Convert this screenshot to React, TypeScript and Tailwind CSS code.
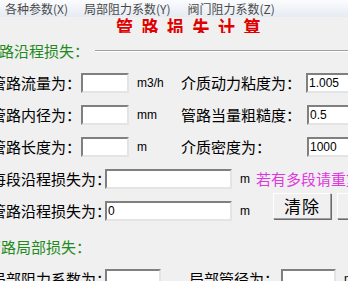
const cjk = "font-['Noto_Sans_CJK_SC',sans-serif]";
const latin = "font-['Liberation_Sans','Noto_Sans_CJK_SC',sans-serif]";

function Box({ w, value }: { w: string; value?: string }) {
  return (
    <div
      className={`${w} h-[20px] shrink-0 bg-white border-2 border-t-[#808080] border-l-[#808080] border-r-[#e4e4e4] border-b-[#e4e4e4] pl-[1px] text-[12px] leading-[16px] text-black ${latin}`}
    >
      {value}
    </div>
  );
}

function Label({ w, text, className = '' }: { w: string; text: string; className?: string }) {
  return (
    <span className={`${w} shrink-0 whitespace-nowrap text-[15px] leading-[20px] text-black ${cjk} ${className}`}>
      {text}
    </span>
  );
}

function Unit({ w, text }: { w: string; text: string }) {
  return <span className={`${w} shrink-0 pl-[8px] text-[12px] text-black ${latin}`}>{text}</span>;
}

export default function App() {
  return (
    <div className="w-[348px] h-[281px] overflow-hidden bg-[#f0f0f0] flex flex-col">
      {/* menu */}
      <div className="h-[17px] shrink-0 flex items-center bg-gradient-to-b from-[#fbfcfe] to-[#e6ebf3] text-[12px] text-[#4a4a4a] font-['Noto_Sans_CJK_SC',sans-serif]">
        <span className="ml-[5px]">各种参数(X)</span>
        <span className="ml-[16px]">局部阻力系数(Y)</span>
        <span className="ml-[17px]">阀门阻力系数(Z)</span>
      </div>

      {/* title, top clipped */}
      <div className="h-[15px] mt-[1px] shrink-0 overflow-hidden pl-[116px]">
        <div
          className={`-mt-[6px] inline-block origin-left scale-x-[0.85] whitespace-nowrap text-[20px] leading-[20px] font-bold tracking-[10px] text-[#e00000] ${cjk}`}
        >
          管路损失计算
        </div>
      </div>

      <div className="flex flex-col -ml-[9px] w-[357px]">
        {/* section 1 */}
        <div className="mt-[8px] flex items-center -ml-[7px]">
          <span className={`shrink-0 text-[15px] leading-[20px] text-[#1f8a1f] ${cjk}`}>管路沿程损失：</span>
          <div className="ml-[6px] flex-1 h-[2px] border-t border-t-[#a0a0a0] border-b border-b-white" />
        </div>

        <div className="mt-[6px] h-[32px] flex items-center">
          <Label w="w-[90px]" text="管路流量为：" />
          <Box w="w-[48px]" />
          <Unit w="w-[52px]" text="m3/h" />
          <Label w="w-[125px]" text="介质动力粘度为：" />
          <Box w="w-[60px]" value="1.005" />
        </div>

        <div className="h-[32px] flex items-center">
          <Label w="w-[90px]" text="管路内径为：" />
          <Box w="w-[48px]" />
          <Unit w="w-[52px]" text="mm" />
          <Label w="w-[126px]" text="管路当量粗糙度：" />
          <Box w="w-[60px]" value="0.5" />
        </div>

        <div className="h-[32px] flex items-center">
          <Label w="w-[90px]" text="管路长度为：" />
          <Box w="w-[48px]" />
          <Unit w="w-[52px]" text="m" />
          <Label w="w-[126px]" text="介质密度为：" />
          <Box w="w-[60px]" value="1000" />
        </div>

        <div className="h-[32px] flex items-center">
          <Label w="w-[114px]" text="每段沿程损失为：" />
          <Box w="w-[127px]" />
          <Unit w="w-[24px]" text="m" />
          <span className={`whitespace-nowrap text-[15px] leading-[20px] text-[#e038e0] ${cjk}`}>若有多段请重复输入</span>
        </div>

        <div className="h-[32px] flex items-center">
          <Label w="w-[114px]" text="管路沿程损失为：" />
          <Box w="w-[127px]" value="0" />
          <Unit w="w-[41px]" text="m" />
          <button
            className={`self-start -mt-[2px] w-[58px] h-[26px] shrink-0 bg-[#f0f0f0] border border-t-white border-l-white border-r-[#a0a0a0] border-b-[#a0a0a0] shadow-[1px_1px_0_#6a6a6a] text-[17px] leading-[22px] tracking-[1px] text-black ${cjk}`}
          >
            清除
          </button>
          <button
            className={`self-start -mt-[2px] ml-[6px] w-[58px] h-[26px] shrink-0 bg-[#f0f0f0] border border-t-white border-l-white border-r-[#a0a0a0] border-b-[#a0a0a0] shadow-[1px_1px_0_#6a6a6a] text-[17px] leading-[22px] text-black ${cjk}`}
          >
            计算
          </button>
        </div>

        {/* section 2 */}
        <div className="mt-[8px] -ml-[5px]">
          <span className={`text-[15px] leading-[20px] text-[#1f8a1f] ${cjk}`}>管路局部损失：</span>
        </div>

        <div className="mt-[4px] h-[32px] flex items-center">
          <Label w="w-[114px]" text="局部阻力系数为：" />
          <Box w="w-[56px]" />
          <span className="w-[28px] shrink-0" />
          <Label w="w-[92px]" text="局部管径为：" />
          <Box w="w-[55px]" />
          <Unit w="w-[30px]" text="mm" />
        </div>
      </div>
    </div>
  );
}
